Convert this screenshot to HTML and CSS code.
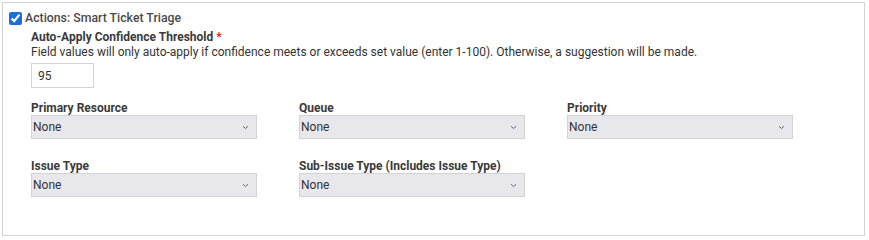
FILE: index.html
```html
<!DOCTYPE html>
<html lang="en">
<head>
    <meta charset="UTF-8">
    <title>Smart Ticket Triage</title>
    <link rel="stylesheet" href="styles.css">
</head>
<body>
    <div class="panel">
        <label class="section-title">
            <input type="checkbox" checked>
            <span>Actions: Smart Ticket Triage</span>
        </label>

        <div class="fields">
            <div class="threshold">
                <div class="field-label">Auto-Apply Confidence Threshold <span class="required">*</span></div>
                <div class="hint">Field values will only auto-apply if confidence meets or exceeds set value (enter 1-100). Otherwise, a suggestion will be made.</div>
                <input class="number-input" type="text" value="95">
            </div>

            <div class="grid">
                <div class="field">
                    <div class="field-label">Primary Resource</div>
                    <div class="select-wrap">
                        <select><option>None</option></select>
                        <svg class="chevron" width="7" height="5" viewBox="0 0 7 5"><path d="M1 1.2 L3.5 3.6 L6 1.2" fill="none" stroke="#666" stroke-width="1"/></svg>
                    </div>
                </div>
                <div class="field">
                    <div class="field-label">Queue</div>
                    <div class="select-wrap">
                        <select><option>None</option></select>
                        <svg class="chevron" width="7" height="5" viewBox="0 0 7 5"><path d="M1 1.2 L3.5 3.6 L6 1.2" fill="none" stroke="#666" stroke-width="1"/></svg>
                    </div>
                </div>
                <div class="field">
                    <div class="field-label">Priority</div>
                    <div class="select-wrap">
                        <select><option>None</option></select>
                        <svg class="chevron" width="7" height="5" viewBox="0 0 7 5"><path d="M1 1.2 L3.5 3.6 L6 1.2" fill="none" stroke="#666" stroke-width="1"/></svg>
                    </div>
                </div>
                <div class="field">
                    <div class="field-label">Issue Type</div>
                    <div class="select-wrap">
                        <select><option>None</option></select>
                        <svg class="chevron" width="7" height="5" viewBox="0 0 7 5"><path d="M1 1.2 L3.5 3.6 L6 1.2" fill="none" stroke="#666" stroke-width="1"/></svg>
                    </div>
                </div>
                <div class="field">
                    <div class="field-label">Sub-Issue Type (Includes Issue Type)</div>
                    <div class="select-wrap">
                        <select><option>None</option></select>
                        <svg class="chevron" width="7" height="5" viewBox="0 0 7 5"><path d="M1 1.2 L3.5 3.6 L6 1.2" fill="none" stroke="#666" stroke-width="1"/></svg>
                    </div>
                </div>
            </div>
        </div>
    </div>
</body>
</html>
```

FILE: styles.css
```css
body {
    margin: 0;
    padding: 2px;
    font-family: Roboto, 'Noto Sans', sans-serif;
    font-size: 12px;
    color: #333;
    background: #fff;
}

.panel {
    border: 1px solid #d3d3d3;
    box-sizing: border-box;
    width: 863px;
    height: 234px;
    padding: 8px 6px 0 6px;
}

.section-title {
    display: flex;
    align-items: center;
    gap: 3px;
    font-weight: 500;
    font-size: 12.3px;
    color: #4a4a4a;
    line-height: 14px;
}

.section-title input {
    margin: 0;
    width: 13px;
    height: 13px;
    accent-color: #1a6fdc;
}

.fields {
    padding-left: 22px;
    padding-top: 5px;
}

.field-label {
    font-weight: 700;
    color: #3a3a3a;
    line-height: 15px;
}

.required {
    color: #e02020;
}

.hint {
    line-height: 15px;
    color: #333;
}

.number-input {
    display: block;
    margin-top: 3px;
    width: 63px;
    height: 25px;
    box-sizing: border-box;
    border: 1px solid #d3d3d3;
    padding: 0 6px;
    font-family: Roboto, sans-serif;
    font-size: 12px;
    color: #333;
    outline: none;
}

.grid {
    display: grid;
    grid-template-columns: 226px 226px 226px;
    column-gap: 42px;
    row-gap: 20px;
    margin-top: 13px;
}

.field-label + .select-wrap {
    margin-top: -1px;
}

.select-wrap {
    position: relative;
    width: 226px;
    height: 24px;
}

.select-wrap select {
    appearance: none;
    -webkit-appearance: none;
    width: 100%;
    height: 100%;
    margin: 0;
    border: 1px solid #d3d3d3;
    background: #e8e8ec;
    padding: 0 0 0 1px;
    font-family: Roboto, sans-serif;
    font-size: 12px;
    color: #333;
    border-radius: 0;
    outline: none;
}

.chevron {
    position: absolute;
    right: 8px;
    top: 10px;
    pointer-events: none;
}
```
